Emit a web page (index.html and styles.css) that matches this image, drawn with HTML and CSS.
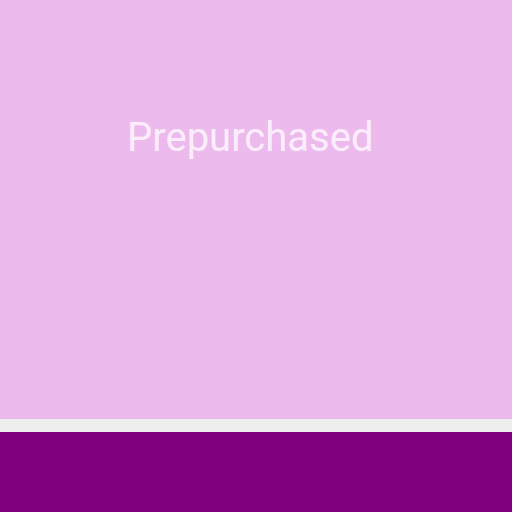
FILE: index.html
```html
<!DOCTYPE html>
<html>
<head>
<meta charset="utf-8">
<link rel="stylesheet" href="styles.css">
</head>
<body>
<div class="screen">
  <div class="card">
    <div class="label">Prepurchased</div>
  </div>
  <div class="divider"></div>
  <div class="footer"></div>
</div>
</body>
</html>
```
FILE: styles.css
```css
html, body { margin: 0; padding: 0; }
.screen { width: 512px; height: 512px; display: flex; flex-direction: column; }
.card { height: 419px; background: #ecbaec; padding-left: 127px; padding-top: 114px; box-sizing: border-box; }
.label { font-family: Roboto, sans-serif; font-size: 40px; line-height: 48px; color: #fcedfc; }
.divider { height: 13px; background: #eeeeee; }
.footer { flex: 1; background: #800080; }
```
